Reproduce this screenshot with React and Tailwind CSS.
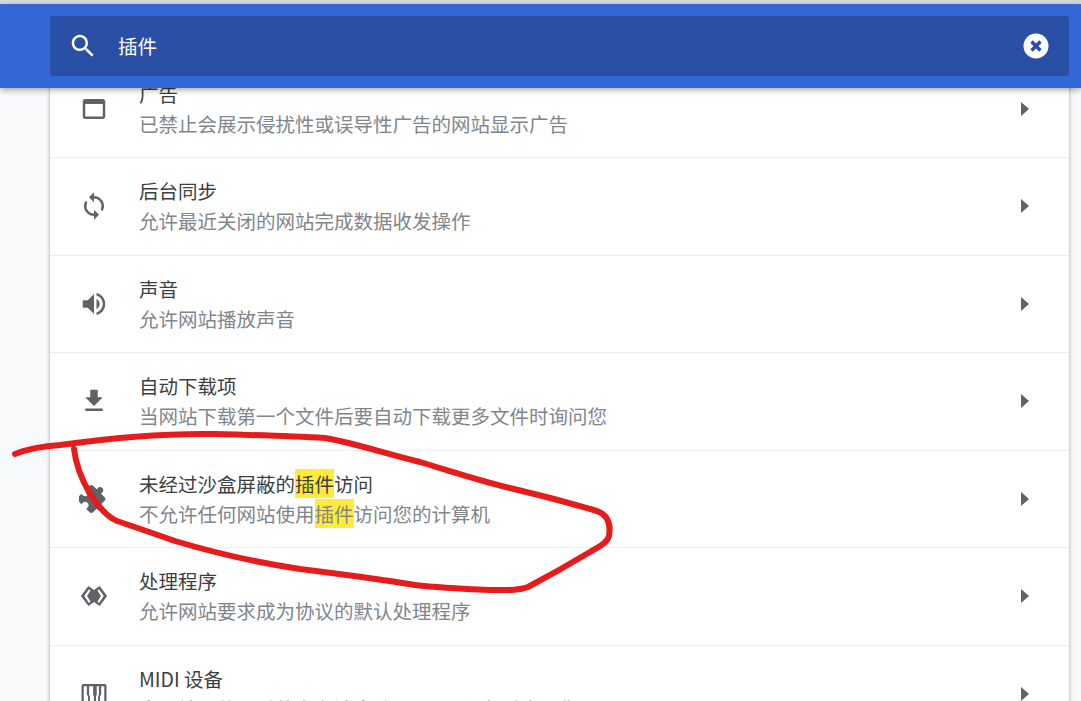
import React from 'react';

const FONT = "font-['Noto_Sans_CJK_SC','Noto_Sans',sans-serif]";

const icons = {
  ads: <path d="M19 4H5c-1.11 0-2 .9-2 2v12c0 1.1.89 2 2 2h14c1.1 0 2-.9 2-2V6c0-1.1-.89-2-2-2zm0 14H5V8h14v10z" />,
  sync: <path d="M12 4V1L8 5l4 4V6c3.31 0 6 2.69 6 6 0 1.01-.25 1.97-.7 2.8l1.46 1.46C19.54 15.03 20 13.57 20 12c0-4.42-3.58-8-8-8zm0 14c-3.31 0-6-2.69-6-6 0-1.01.25-1.97.7-2.8L5.24 7.74C4.46 8.97 4 10.43 4 12c0 4.42 3.58 8 8 8v3l4-4-4-4v3z" />,
  sound: <path d="M3 9v6h4l5 5V4L7 9H3zm13.5 3c0-1.77-1.02-3.29-2.5-4.03v8.05c1.48-.73 2.5-2.25 2.5-4.02zM14 3.23v2.06c2.89.86 5 3.54 5 6.71s-2.11 5.85-5 6.71v2.06c4.01-.91 7-4.49 7-8.77s-2.99-7.86-7-8.77z" />,
  download: <path d="M19 9h-4V3H9v6H5l7 7 7-7zM5 18v2h14v-2H5z" />,
  plugin: (
    <path
      transform="rotate(45 12 12)"
      d="M20.5 11H19V7c0-1.1-.9-2-2-2h-4V3.5C13 2.12 11.88 1 10.5 1S8 2.12 8 3.5V5H4c-1.1 0-1.99.9-1.99 2v3.8H3.5c1.49 0 2.7 1.21 2.7 2.7s-1.21 2.7-2.7 2.7H2V20c0 1.1.9 2 2 2h3.8v-1.5c0-1.49 1.21-2.7 2.7-2.7 1.49 0 2.7 1.21 2.7 2.7V22H17c1.1 0 2-.9 2-2v-4h1.5c1.38 0 2.5-1.12 2.5-2.5S21.88 11 20.5 11z"
    />
  ),
  handler: (
    <path
      fillRule="evenodd"
      d="M7.5 4 12 7.2 16.5 4 22.5 12 16.5 20 12 16.8 7.5 20 1.5 12zM8 6.5 4.2 12 8 17.5 9.2 16.3 6.4 12 9.2 7.7zM16 6.5 14.8 7.7 17.6 12 14.8 16.3 16 17.5 19.8 12z"
    />
  ),
  midi: (
    <path
      fillRule="evenodd"
      d="M3.5 4h17c.83 0 1.5.67 1.5 1.5v13c0 .83-.67 1.5-1.5 1.5h-17c-.83 0-1.5-.67-1.5-1.5v-13C2 4.670 2.670 4 3.500 4zM3.800 5.800v12.400h3.400v-5h-.9V5.800zM8.100 5.800v7.400h.6v5h6.600v-5h.6V5.800h-1.700v7.400h-.6v5h-1.700v-5h-.6V5.800zM17.700 5.800v7.400h-.9v5h3.400V5.800z"
    />
  ),
};

const Hl = ({ children }) => <span className="bg-[#ffeb3b]">{children}</span>;

const rows = [
  { icon: 'ads', title: '广告', sub: '已禁止会展示侵扰性或误导性广告的网站显示广告' },
  { icon: 'sync', title: '后台同步', sub: '允许最近关闭的网站完成数据收发操作' },
  { icon: 'sound', title: '声音', sub: '允许网站播放声音' },
  { icon: 'download', title: '自动下载项', sub: '当网站下载第一个文件后要自动下载更多文件时询问您' },
  {
    icon: 'plugin',
    title: <>未经过沙盒屏蔽的<Hl>插件</Hl>访问</>,
    sub: <>不允许任何网站使用<Hl>插件</Hl>访问您的计算机</>,
  },
  { icon: 'handler', title: '处理程序', sub: '允许网站要求成为协议的默认处理程序' },
  { icon: 'midi', title: 'MIDI 设备', sub: '当网站要使用系统专有消息访问 MIDI 设备时询问您' },
];

function Row({ icon, title, sub }) {
  return (
    <div className="flex h-[97.5px] shrink-0 items-center border-b border-[#eeeeee] pl-[29px] pr-[40px]">
      <svg className="h-[30px] w-[30px] shrink-0 fill-[#5f6368]" viewBox="0 0 24 24">
        {icons[icon]}
      </svg>
      <div className="ml-[30px] flex-1 text-[19.5px] leading-[30px]">
        <div className="text-[#3c4043]">{title}</div>
        <div className="text-[#80868b]">{sub}</div>
      </div>
      <svg className="h-[14px] w-[8px] fill-[#5f6368]" viewBox="0 0 8 14">
        <path d="M0 0 8 7 0 14z" />
      </svg>
    </div>
  );
}

export default function App() {
  return (
    <div className={`relative h-[701px] overflow-hidden bg-[#f8f9fa] ${FONT}`}>
      <div className="h-1 bg-[#d9d9d9]" />
      <header className="relative z-10 h-[84px] bg-[#3367d6] pb-3 pl-[50px] pr-3 pt-3 shadow-[0_2px_6px_rgba(0,0,0,0.35)]">
        <div className="flex h-[60px] items-center rounded-[3px] bg-[#2a50a5] pl-[18px] pr-[20px]">
          <svg className="h-[30px] w-[30px] fill-white" viewBox="0 0 24 24">
            <path d="M15.5 14h-.79l-.28-.27C15.41 12.59 16 11.11 16 9.5 16 5.91 13.09 3 9.5 3S3 5.91 3 9.5 5.91 16 9.5 16c1.61 0 3.09-.59 4.23-1.57l.27.28v.79l5 4.99L20.49 19l-4.99-5zm-6 0C7.01 14 5 11.99 5 9.5S7.01 5 9.5 5 14 7.01 14 9.5 11.99 14 9.5 14z" />
          </svg>
          <span className="ml-5 flex-1 text-[19.5px] text-white">插件</span>
          <svg className="h-[26px] w-[26px]" viewBox="0 0 26 26">
            <circle cx="13" cy="13" r="12.500" fill="#ffffff" />
            <path d="M8.500 8.500l9 9M17.500 8.500l-9 9" stroke="#2a50a5" strokeWidth="3.500" fill="none" />
          </svg>
        </div>
      </header>
      <main className="ml-[50px] mr-3 -mt-[27.5px] flex flex-col bg-white shadow-[0_0_4px_rgba(0,0,0,0.35)]">
        {rows.map((row) => (
          <Row key={row.icon} {...row} />
        ))}
      </main>
      {/* red marker scribble on top of the screenshot */}
      <svg className="absolute left-0 top-0 z-20 h-[701px] w-[1081px]" viewBox="0 0 1081 701" fill="none">
        <path
          d="M15 454C30 448 44 446 60 445C110 438 160 433 215 434C255 435 290 436 325 438C350 442 380 452 420 462C450 471 480 481 510 488C540 495 570 503 597 511C608 515 611 524 609 536C607 543 600 546 590 552C570 564 545 578 528 587C518 591 505 590 490 590C465 589 440 588 415 585C380 579 340 574 300 569C260 563 215 553 175 541C155 534 135 527 117 521C107 517 98 506 90 494C82 480 76 467 74 449"
          stroke="#e61c1c"
          strokeWidth="6"
          strokeLinecap="round"
          strokeLinejoin="round"
        />
      </svg>
    </div>
  );
}
